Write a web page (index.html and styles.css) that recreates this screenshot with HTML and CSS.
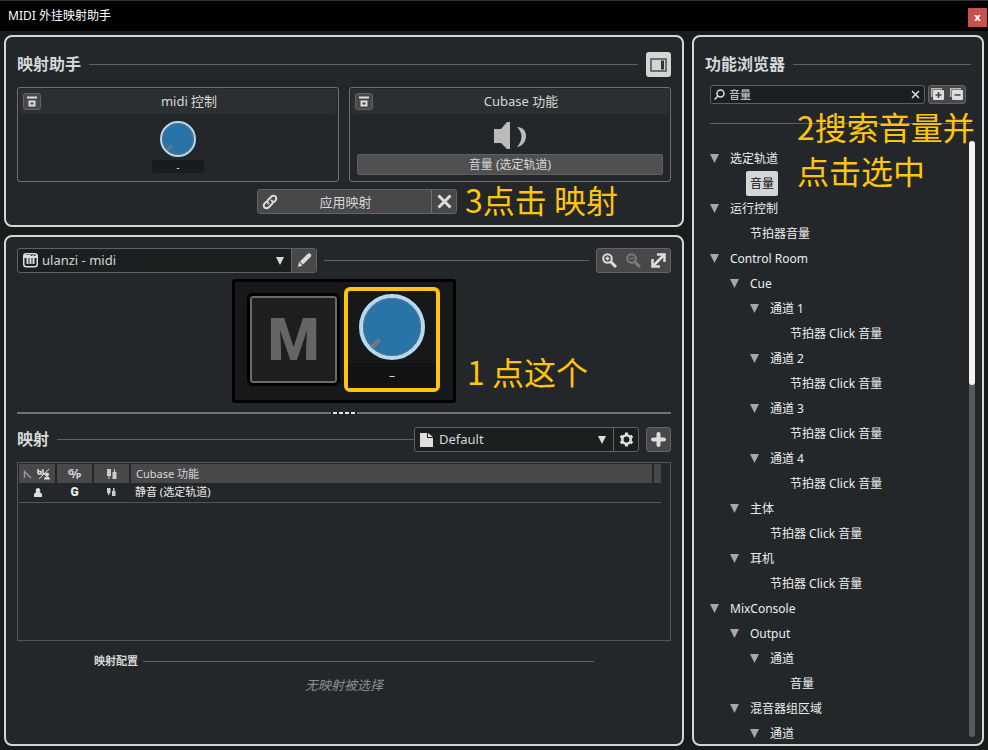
FILE: index.html
```html
<!DOCTYPE html>
<html lang="zh-CN">

<head>
    <meta charset="UTF-8">
    <meta name="viewport" content="width=device-width, initial-scale=1.0">
    <title>MIDI 外挂映射助手</title>
    <link rel="stylesheet" href="styles.css">
</head>

<body>
    <header class="titlebar">
        <h1>MIDI 外挂映射助手</h1>
        <button class="close" aria-label="关闭">x</button>
    </header>

    <main class="window">
        <div class="left">
            <section class="panel assistant">
                <div class="section-head">
                    <h2>映射助手</h2>
                    <span class="rule"></span>
                    <button class="toggle-browser" aria-label="功能浏览器">
                        <svg width="17" height="14" viewBox="0 0 17 14"><rect x="1" y="1" width="15" height="12" fill="none" stroke="#4a4c4d" stroke-width="1.5"/><path d="M11 2.500h3v9h-3z" fill="#333"/></svg>
                    </button>
                </div>

                <div class="cards">
                    <div class="card">
                        <div class="card-head">
                            <button class="pin" aria-label="锁定控制">
                                <svg width="12" height="12" viewBox="0 0 12 12"><path d="M1 1.500h10M3.500 5.500h5v4h-5z" fill="none" stroke="#ddd" stroke-width="2"/></svg>
                            </button>
                            <h3>midi 控制</h3>
                        </div>
                        <div class="card-body">
                            <svg class="knob-small" width="38" height="38" viewBox="0 0 38 38"><circle cx="19" cy="19" r="17" fill="#2874a9" stroke="#b4d9f3" stroke-width="2"/><circle cx="19" cy="19" r="15.500" fill="none" stroke="#68737b"/><path d="M8 30l5-5" stroke="#777" stroke-width="2"/></svg>
                            <span class="value">-</span>
                        </div>
                    </div>
                    <div class="card">
                        <div class="card-head">
                            <button class="pin" aria-label="锁定功能">
                                <svg width="12" height="12" viewBox="0 0 12 12"><path d="M1 1.500h10M3.500 5.500h5v4h-5z" fill="none" stroke="#ddd" stroke-width="2"/></svg>
                            </button>
                            <h3>Cubase 功能</h3>
                        </div>
                        <div class="card-body">
                            <svg width="32" height="27" viewBox="0 0 32 27" fill="#bbb"><path d="M0 7h7l6-7h3v27h-3l-6-6H0z"/><path d="M23 5c6 0 9 4 9 9s-3 10-9 11c6-7 6-14 0-20z"/></svg>
                            <button class="function-name">音量 (选定轨道)</button>
                        </div>
                    </div>
                </div>

                <div class="actions">
                    <div class="apply-group">
                        <button class="apply">
                            <svg width="16" height="16" viewBox="0 0 16 16" fill="none" stroke="#ddd" stroke-width="2" stroke-linecap="round"><path d="M6.500 9.500c-1.500-1-1.500-2.500-.5-3.500l3.500-3.500c1-1 3-1 4 0s1 3 0 4l-1.500 1.500"/><path d="M9.500 6.500c1.500 1 1.500 2.500 .5 3.500l-3.500 3.500c-1 1-3 1-4 0s-1-3 0-4L4 8"/></svg>
                            <span>应用映射</span>
                        </button>
                        <button class="cancel" aria-label="取消">
                            <svg width="15" height="15" viewBox="0 0 15 15"><path d="M1.500 1.500l12 12M13.500 1.500l-12 12" stroke="#ddd" stroke-width="3"/></svg>
                        </button>
                        <p class="note note-apply">3点击 映射</p>
                    </div>
                </div>
            </section>

            <section class="panel surface-panel">
                <div class="bar">
                    <div class="combo combo-device">
                        <svg width="15" height="15" viewBox="0 0 15 15"><rect x=".75" y=".75" width="13.500" height="13" rx="2.500" fill="none" stroke="#ddd" stroke-width="1.500"/><path d="M1 2h13v3H1zM3.500 4h2v7h-2zM6.500 4h2v7h-2zM9.500 4h2v7h-2z" fill="#ddd"/><path d="M8 2.500h1.500M11 2.500h1.500" stroke="#222"/></svg>
                        <select aria-label="MIDI 控制器">
                            <option>ulanzi - midi</option>
                        </select>
                        <svg class="arrow" width="8" height="8" viewBox="0 0 8 8"><path d="M0 0h8L4 8z" fill="#ddd"/></svg>
                        <button class="combo-button filled" aria-label="编辑控制器">
                            <svg width="15" height="15" viewBox="0 0 15 15" fill="#ddd"><path d="M1 14l1-5 3.500 3.500z"/><path d="M3 8.500L10.500 1c1-1 2-1 3 0s1 2 0 3L6 11.500z"/></svg>
                        </button>
                    </div>
                    <span class="rule"></span>
                    <div class="zoom-group">
                        <button aria-label="放大">
                            <svg width="15" height="15" viewBox="0 0 15 15" fill="none" stroke="#ddd"><circle cx="5.500" cy="5.500" r="4.300" stroke-width="2"/><path d="M3.500 5.500h4M5.500 3.500v4" stroke-width="1.500"/><path d="M9 9l5 5" stroke-width="3"/></svg>
                        </button>
                        <button aria-label="缩小" disabled>
                            <svg width="15" height="15" viewBox="0 0 15 15" fill="none" stroke="#7c7c7d"><circle cx="5.500" cy="5.500" r="4.300" stroke-width="2"/><path d="M3.500 5.500h4" stroke-width="1.500"/><path d="M9 9l5 5" stroke-width="3"/></svg>
                        </button>
                        <button aria-label="适应窗口">
                            <svg width="15" height="15" viewBox="0 0 15 15" fill="none" stroke="#ddd" stroke-width="2.500"><path d="M6 1.500h7.500V9M1.500 6v7.500H9"/><path d="M2 13L13 2"/></svg>
                        </button>
                    </div>
                </div>

                <div class="surface-area">
                    <div class="surface">
                        <button class="pad">M</button>
                        <button class="knob" aria-label="旋钮">
                            <svg width="66" height="66" viewBox="0 0 66 66"><circle cx="33" cy="33" r="31" fill="#2874a9" stroke="#b4d9f3" stroke-width="4"/><circle cx="33" cy="33" r="28.500" fill="none" stroke="#68737b"/><path d="M12.500 53.500l8-8" stroke="#777" stroke-width="4"/></svg>
                            <span>–</span>
                        </button>
                        <p class="note note-pick">1 点这个</p>
                    </div>
                </div>

                <div class="splitter"><i></i><i></i><i></i><i></i></div>

                <div class="bar">
                    <h2>映射</h2>
                    <span class="rule"></span>
                    <div class="combo combo-page">
                        <svg width="13" height="14" viewBox="0 0 13 14" fill="#ddd"><path d="M0 0h7v5h6v9H0z"/><path d="M8 0l5 4H8z"/></svg>
                        <select aria-label="映射页">
                            <option>Default</option>
                        </select>
                        <svg class="arrow" width="8" height="8" viewBox="0 0 8 8"><path d="M0 0h8L4 8z" fill="#ddd"/></svg>
                        <button class="combo-button" aria-label="页面设置">
                            <svg width="15" height="15" viewBox="0 0 15 15" fill="none" stroke="#ddd"><circle cx="7.500" cy="7.500" r="4.200" stroke-width="2.600"/><path d="M7.500 .5v3M7.500 11.500v3M1.500 4l2.500 1.500M11 9.500l2.500 1.500M1.500 11L4 9.500M11 5.500L13.500 4" stroke-width="3"/></svg>
                        </button>
                    </div>
                    <button class="add" aria-label="添加映射页">
                        <svg width="15" height="15" viewBox="0 0 15 15"><path d="M7.500 2v11M2 7.500h11" stroke="#ddd" stroke-width="4" stroke-linecap="round"/></svg>
                    </button>
                </div>

                <div class="table-box">
                    <table>
                        <thead>
                            <tr>
                                <th class="narrow">
                                    <svg width="28" height="13" viewBox="0 0 28 13" fill="none" stroke="#ddd"><path d="M1.500 11V4.500L8 11" stroke="#999" stroke-width="1.500"/><path d="M15 2v5M15 4.500h3V7h-3M20 2v5h2" stroke-width="1.500"/><path d="M16 12L26 2"/><circle cx="24" cy="7.500" r="2" fill="#ddd" stroke="none"/><path d="M21 12.500c0-4 6-4 6 0z" fill="#ddd" stroke="none"/></svg>
                                </th>
                                <th class="narrow"><span class="gp"><sup>G</sup>⁄<sub>P</sub></span></th>
                                <th class="narrow">
                                    <svg width="10" height="12" viewBox="0 0 10 12" fill="#ccc"><path d="M0 1h4v7H0zM1.500 8h1v3h-1zM5.500 4h4v7h-4zM7 1h1v3H7z"/></svg>
                                </th>
                                <th>Cubase 功能</th>
                                <th class="end"></th>
                            </tr>
                        </thead>
                        <tbody>
                            <tr>
                                <td class="narrow">
                                    <svg width="8" height="9" viewBox="0 0 8 9" fill="#ddd"><circle cx="4" cy="2.200" r="2.200"/><path d="M2.500 3.500h3L8 6v3H0V6z"/></svg>
                                </td>
                                <td class="narrow"><b class="global">G</b></td>
                                <td class="narrow">
                                    <svg width="9" height="10" viewBox="0 0 9 10" fill="#ccc"><path d="M0 1h3.500v5H0zM1 6h1.500v2H1zM5 4h3.500v5H5zM6 1h1.500v3H6z"/></svg>
                                </td>
                                <td>静音 (选定轨道)</td>
                                <td class="end"></td>
                            </tr>
                        </tbody>
                    </table>
                </div>

                <div class="config">
                    <div class="config-head">
                        <h4>映射配置</h4>
                        <span class="rule"></span>
                    </div>
                    <p>无映射被选择</p>
                </div>
            </section>
        </div>

        <aside class="panel browser">
            <div class="section-head">
                <h2>功能浏览器</h2>
                <span class="rule"></span>
            </div>
            <div class="search-row">
                <div class="search">
                    <svg width="11" height="11" viewBox="0 0 11 11" fill="none" stroke="#ddd" stroke-width="1.500"><circle cx="6.500" cy="4.500" r="3.500"/><path d="M4 7L.5 10.500"/></svg>
                    <input type="text" value="音量" aria-label="搜索功能">
                    <button class="clear" aria-label="清除">
                        <svg width="9" height="9" viewBox="0 0 9 9"><path d="M1 1l7 7M8 1L1 8" stroke="#ddd" stroke-width="1.500"/></svg>
                    </button>
                </div>
                <div class="expand-group">
                    <button aria-label="全部展开">
                        <svg width="14" height="13" viewBox="0 0 14 13"><path d="M.75 9V.75H11" fill="none" stroke="#bbb" stroke-width="1.500"/><rect x="2" y="2" width="11" height="10" rx="1" fill="#ddd"/><path d="M4.500 7h6M7.500 4v6" stroke="#444" stroke-width="1.500"/></svg>
                    </button>
                    <button aria-label="全部折叠">
                        <svg width="14" height="13" viewBox="0 0 14 13"><path d="M.75 9V.75H11" fill="none" stroke="#bbb" stroke-width="1.500"/><rect x="2" y="2" width="11" height="10" rx="1" fill="#ddd"/><path d="M4.500 7h6" stroke="#444" stroke-width="1.500"/></svg>
                    </button>
                </div>
            </div>
            <div class="divider"></div>
            <p class="note note-search">2搜索音量并<br>点击选中</p>

            <div class="tree-area">
                <ul class="tree">
                    <li>
                        <div class="row"><button class="twisty" aria-label="折叠"></button><button class="item">选定轨道</button></div>
                        <ul>
                            <li><div class="row leaf"><button class="item selected">音量</button></div></li>
                        </ul>
                    </li>
                    <li>
                        <div class="row"><button class="twisty" aria-label="折叠"></button><button class="item">运行控制</button></div>
                        <ul>
                            <li><div class="row leaf"><button class="item">节拍器音量</button></div></li>
                        </ul>
                    </li>
                    <li>
                        <div class="row"><button class="twisty" aria-label="折叠"></button><button class="item">Control Room</button></div>
                        <ul>
                            <li>
                                <div class="row"><button class="twisty" aria-label="折叠"></button><button class="item">Cue</button></div>
                                <ul>
                                    <li>
                                        <div class="row"><button class="twisty" aria-label="折叠"></button><button class="item">通道 1</button></div>
                                        <ul>
                                            <li><div class="row leaf"><button class="item">节拍器 Click 音量</button></div></li>
                                        </ul>
                                    </li>
                                    <li>
                                        <div class="row"><button class="twisty" aria-label="折叠"></button><button class="item">通道 2</button></div>
                                        <ul>
                                            <li><div class="row leaf"><button class="item">节拍器 Click 音量</button></div></li>
                                        </ul>
                                    </li>
                                    <li>
                                        <div class="row"><button class="twisty" aria-label="折叠"></button><button class="item">通道 3</button></div>
                                        <ul>
                                            <li><div class="row leaf"><button class="item">节拍器 Click 音量</button></div></li>
                                        </ul>
                                    </li>
                                    <li>
                                        <div class="row"><button class="twisty" aria-label="折叠"></button><button class="item">通道 4</button></div>
                                        <ul>
                                            <li><div class="row leaf"><button class="item">节拍器 Click 音量</button></div></li>
                                        </ul>
                                    </li>
                                </ul>
                            </li>
                            <li>
                                <div class="row"><button class="twisty" aria-label="折叠"></button><button class="item">主体</button></div>
                                <ul>
                                    <li><div class="row leaf"><button class="item">节拍器 Click 音量</button></div></li>
                                </ul>
                            </li>
                            <li>
                                <div class="row"><button class="twisty" aria-label="折叠"></button><button class="item">耳机</button></div>
                                <ul>
                                    <li><div class="row leaf"><button class="item">节拍器 Click 音量</button></div></li>
                                </ul>
                            </li>
                        </ul>
                    </li>
                    <li>
                        <div class="row"><button class="twisty" aria-label="折叠"></button><button class="item">MixConsole</button></div>
                        <ul>
                            <li>
                                <div class="row"><button class="twisty" aria-label="折叠"></button><button class="item">Output</button></div>
                                <ul>
                                    <li>
                                        <div class="row"><button class="twisty" aria-label="折叠"></button><button class="item">通道</button></div>
                                        <ul>
                                            <li><div class="row leaf"><button class="item">音量</button></div></li>
                                        </ul>
                                    </li>
                                </ul>
                            </li>
                            <li>
                                <div class="row"><button class="twisty" aria-label="折叠"></button><button class="item">混音器组区域</button></div>
                                <ul>
                                    <li>
                                        <div class="row"><button class="twisty" aria-label="折叠"></button><button class="item">通道</button></div>
                                    </li>
                                </ul>
                            </li>
                        </ul>
                    </li>
                </ul>
                <div class="scrollbar"><div class="thumb"></div></div>
            </div>
        </aside>
    </main>
</body>

</html>
```

FILE: styles.css
```css
* {
    box-sizing: border-box;
}

body {
    margin: 0;
    height: 100vh;
    display: flex;
    flex-direction: column;
    background-color: #191c1d;
    color: #d6d8d8;
    font-family: "Noto Sans", "Noto Sans CJK SC", sans-serif;
    font-size: 12px;
    line-height: 16px;
}

h1, h2, h3, h4, p, ul {
    margin: 0;
    padding: 0;
}

button, input, select {
    font: inherit;
    color: inherit;
    margin: 0;
    padding: 0;
    border: none;
    background: none;
}

button {
    display: flex;
    align-items: center;
    justify-content: center;
}

svg {
    display: block;
    flex: none;
}

/* Title bar */
.titlebar {
    flex: none;
    display: flex;
    align-items: center;
    justify-content: space-between;
    height: 31px;
    padding: 2px 1px 0 8px;
    border-top: 1px solid #333333;
    background-color: #000000;
}

.titlebar h1 {
    font-size: 12px;
    line-height: 18px;
    padding-bottom: 2px;
    font-weight: normal;
    color: #ffffff;
}

.close {
    width: 19px;
    height: 19px;
    background-color: #c75050;
    color: #ffffff;
    font-size: 11px;
    font-weight: bold;
}

/* Panels */
.window {
    flex: 1;
    min-height: 0;
    display: grid;
    grid-template-columns: 1fr 292px;
    gap: 8px;
    padding: 4px;
}

.left {
    display: flex;
    flex-direction: column;
    gap: 8px;
    min-height: 0;
}

.panel {
    display: flex;
    flex-direction: column;
    padding: 11px;
    border: 2px solid #d4d6d5;
    border-radius: 8px;
    background-color: #232729;
}

.panel h2 {
    font-size: 16px;
    line-height: 25px;
    font-weight: bold;
}

.section-head {
    display: flex;
    align-items: center;
    gap: 8px;
    height: 25px;
    margin-top: 4px;
}

.rule {
    flex: 1;
    height: 1px;
    background-color: #5f6263;
}

.toggle-browser {
    width: 25px;
    height: 25px;
    border-radius: 3px;
    background-color: #d4d6d5;
}

/* Mapping assistant */
.cards {
    display: grid;
    grid-template-columns: 1fr 1fr;
    gap: 10px;
    margin-top: 10px;
}

.card {
    height: 95px;
    padding: 1px;
    border: 1px solid #6e7172;
    border-radius: 3px;
}

.card-head {
    display: flex;
    align-items: center;
    height: 25px;
    padding-left: 4px;
    border-radius: 3px;
    background-color: #2b2f31;
}

.card-head h3 {
    flex: 1;
    padding-bottom: 2px;
    text-align: center;
    font-size: 13px;
    font-weight: normal;
}

.pin {
    width: 18px;
    height: 17px;
    border: 1px solid #626465;
    border-radius: 3px;
    background-color: #48484a;
}

.card-body {
    display: flex;
    flex-direction: column;
    align-items: center;
    gap: 5px;
    padding: 8px 6px 0;
}

.knob-small {
    margin: -2px 0 -3px;
}

.value {
    width: 52px;
    height: 13px;
    border-radius: 2px;
    background-color: #1a1b1c;
    text-align: center;
    font-size: 11px;
    line-height: 13px;
}

.function-name {
    width: 100%;
    height: 21px;
    border: 1px solid #5f6061;
    border-radius: 2px;
    background-color: #505052;
}

.actions {
    display: flex;
    justify-content: center;
    margin-top: 7px;
    padding-left: 26px;
}

.apply-group {
    position: relative;
    display: flex;
    width: 200px;
    height: 25px;
    border: 1px solid #626465;
    border-radius: 3px;
    background-color: #48484a;
}

.apply {
    flex: 1;
    padding: 0 18px 0 4px;
    font-size: 13px;
}

.apply span {
    flex: 1;
}

.cancel {
    width: 25px;
    border-left: 1px solid #6e7172;
}

/* Tutorial notes written over the window */
.note {
    position: absolute;
    color: #ffc40d;
    font-family: "Noto Sans CJK SC", sans-serif;
    font-size: 32px;
    line-height: 44px;
    white-space: nowrap;
    pointer-events: none;
}

.note-apply {
    left: 207px;
    top: -13px;
}

.note-pick {
    left: 232px;
    top: 67px;
}

.note-search {
    left: 103px;
    top: 67px;
}

/* Controller surface */
.surface-panel {
    flex: 1;
    min-height: 0;
}

.bar {
    flex: none;
    display: flex;
    align-items: center;
    height: 25px;
}

.combo {
    display: flex;
    align-items: center;
    height: 25px;
    padding-left: 5px;
    border: 1px solid #5f6263;
    border-radius: 3px;
    background-color: #1b1f20;
}

.combo-device {
    width: 300px;
}

.combo-device + .rule {
    margin: 0 7px;
}

.combo-page {
    width: 225px;
    margin-right: 7px;
}

.combo select {
    flex: 1;
    height: 22px;
    padding: 0 4px 2px;
    appearance: none;
    font-size: 13px;
}

.combo option {
    background-color: #1b1f20;
}

.combo-page select {
    padding-left: 6px;
}

.arrow {
    margin-right: 7px;
}

.combo-button {
    width: 25px;
    height: 23px;
    border-left: 1px solid #5f6263;
}

.filled {
    background-color: #48484a;
}

.zoom-group {
    display: flex;
    height: 25px;
    border: 1px solid #626465;
    border-radius: 3px;
    background-color: #48484a;
}

.zoom-group button {
    width: 25px;
}

.zoom-group button:first-child,
.zoom-group button:last-child {
    width: 24px;
}

.surface-area {
    display: flex;
    justify-content: center;
    margin-top: 6px;
}

.surface {
    position: relative;
    display: flex;
    align-items: center;
    gap: 4px;
    width: 224px;
    height: 124px;
    padding: 0 12px 3px;
    border: 3px solid #000000;
    border-radius: 3px;
    background-color: #161819;
}

.pad {
    width: 93px;
    height: 93px;
    border: 3px solid #000000;
    border-radius: 6px;
    background-color: #1e1e1e;
    box-shadow: inset 0 0 0 2px #6a6a6b;
    color: #656567;
    font-family: Roboto, sans-serif;
    font-size: 59px;
    font-weight: 900;
    line-height: 59px;
}

.knob {
    flex-direction: column;
    justify-content: space-between;
    width: 96px;
    height: 105px;
    padding-top: 3px;
    border: 4px solid #ffc40d;
    border-radius: 6px;
}

.knob span {
    width: 100%;
    height: 25px;
    background-color: #111314;
    line-height: 25px;
}

.splitter {
    flex: none;
    display: flex;
    align-items: center;
    gap: 2px;
    height: 2px;
    margin: 9px 0 13px;
}

.splitter::before,
.splitter::after {
    content: "";
    flex: 1;
    height: 2px;
    background-color: #707374;
}

.splitter i {
    width: 4px;
    height: 2px;
    background-color: #e4e6e5;
}

/* Mappings */
.bar h2 {
    margin-right: 8px;
}

.add {
    width: 25px;
    height: 25px;
    border: 1px solid #626465;
    border-radius: 3px;
    background-color: #48484a;
}

.table-box {
    flex: 1;
    min-height: 60px;
    margin-top: 10px;
    padding: 1px 9px 0 1px;
    border: 1px solid #535657;
}

table {
    width: 100%;
    table-layout: fixed;
    border-collapse: collapse;
    font-size: 11px;
    line-height: 16px;
}

th, td {
    height: 19px;
    padding: 0 5px;
    text-align: left;
    font-weight: normal;
}

th {
    border-right: 2px solid #232729;
    background-color: #48484a;
}

td {
    border-bottom: 1px solid #535657;
    color: #eeeeee;
}

th:last-child {
    border-right: none;
}

.narrow {
    width: 37px;
    padding: 0;
    text-align: center;
}

.narrow svg {
    margin: 0 auto;
}

.end {
    width: 8px;
    padding: 0;
}

.gp {
    font-size: 12px;
    font-weight: bold;
    line-height: 12px;
}

.gp sup,
.gp sub {
    font-size: 9px;
    line-height: 8px;
}

.gp sup {
    vertical-align: 3px;
}

.gp sub {
    vertical-align: -1px;
}

.global {
    font-family: Roboto, sans-serif;
    font-size: 12px;
    font-weight: 900;
}

.config {
    flex: none;
    height: 92px;
    padding: 12px 77px 0;
}

.config-head {
    display: flex;
    align-items: center;
    gap: 5px;
}

.config h4 {
    font-size: 11px;
    font-weight: bold;
}

.config p {
    margin-top: 8px;
    text-align: center;
    color: #8d9091;
    font-size: 13px;
    font-style: italic;
}

/* Function browser */
.browser {
    position: relative;
    min-height: 0;
    padding-bottom: 2px;
}

.search-row {
    flex: none;
    display: flex;
    gap: 3px;
    margin-top: 8px;
    padding: 0 5px;
}

.search {
    flex: 1;
    min-width: 0;
    display: flex;
    align-items: center;
    gap: 4px;
    height: 19px;
    padding: 0 4px 0 3px;
    border: 1px solid #5f6263;
    border-radius: 3px;
    background-color: #1b1f20;
}

.search input {
    flex: 1;
    min-width: 0;
    font-size: 11px;
    line-height: 16px;
}

.expand-group {
    display: flex;
    align-items: center;
    gap: 5px;
    width: 38px;
    height: 19px;
    padding-left: 2px;
    border: 1px solid #626465;
    border-radius: 3px;
    background-color: #48484a;
}

.divider {
    flex: none;
    height: 1px;
    margin: 19px 0 17px 5px;
    background-color: #5f6263;
}

.tree-area {
    flex: 1;
    min-height: 0;
    display: flex;
    margin-right: -4px;
}

.tree {
    flex: 1;
    overflow: hidden;
    padding: 5px 0 0 5px;
}

.tree ul {
    padding-left: 20px;
}

.tree li {
    list-style: none;
}

.row {
    display: flex;
    align-items: center;
    height: 25px;
}

.leaf {
    padding-left: 16px;
}

.twisty {
    width: 16px;
    height: 25px;
    justify-content: flex-start;
}

.twisty::before {
    content: "";
    width: 9px;
    height: 9px;
    background-color: #a5a7a8;
    clip-path: polygon(0 0, 100% 0, 50% 100%);
}

.item {
    height: 25px;
    padding: 0 4px;
    color: #eceeed;
}

.selected {
    border-radius: 2px;
    background-color: #d4d6d5;
    color: #111111;
}

.scrollbar {
    width: 6px;
    margin-bottom: 5px;
    border-radius: 3px;
    background-color: #58595a;
}

.thumb {
    height: 41%;
    border-radius: 3px;
    background-color: #f4f4f4;
}
```
